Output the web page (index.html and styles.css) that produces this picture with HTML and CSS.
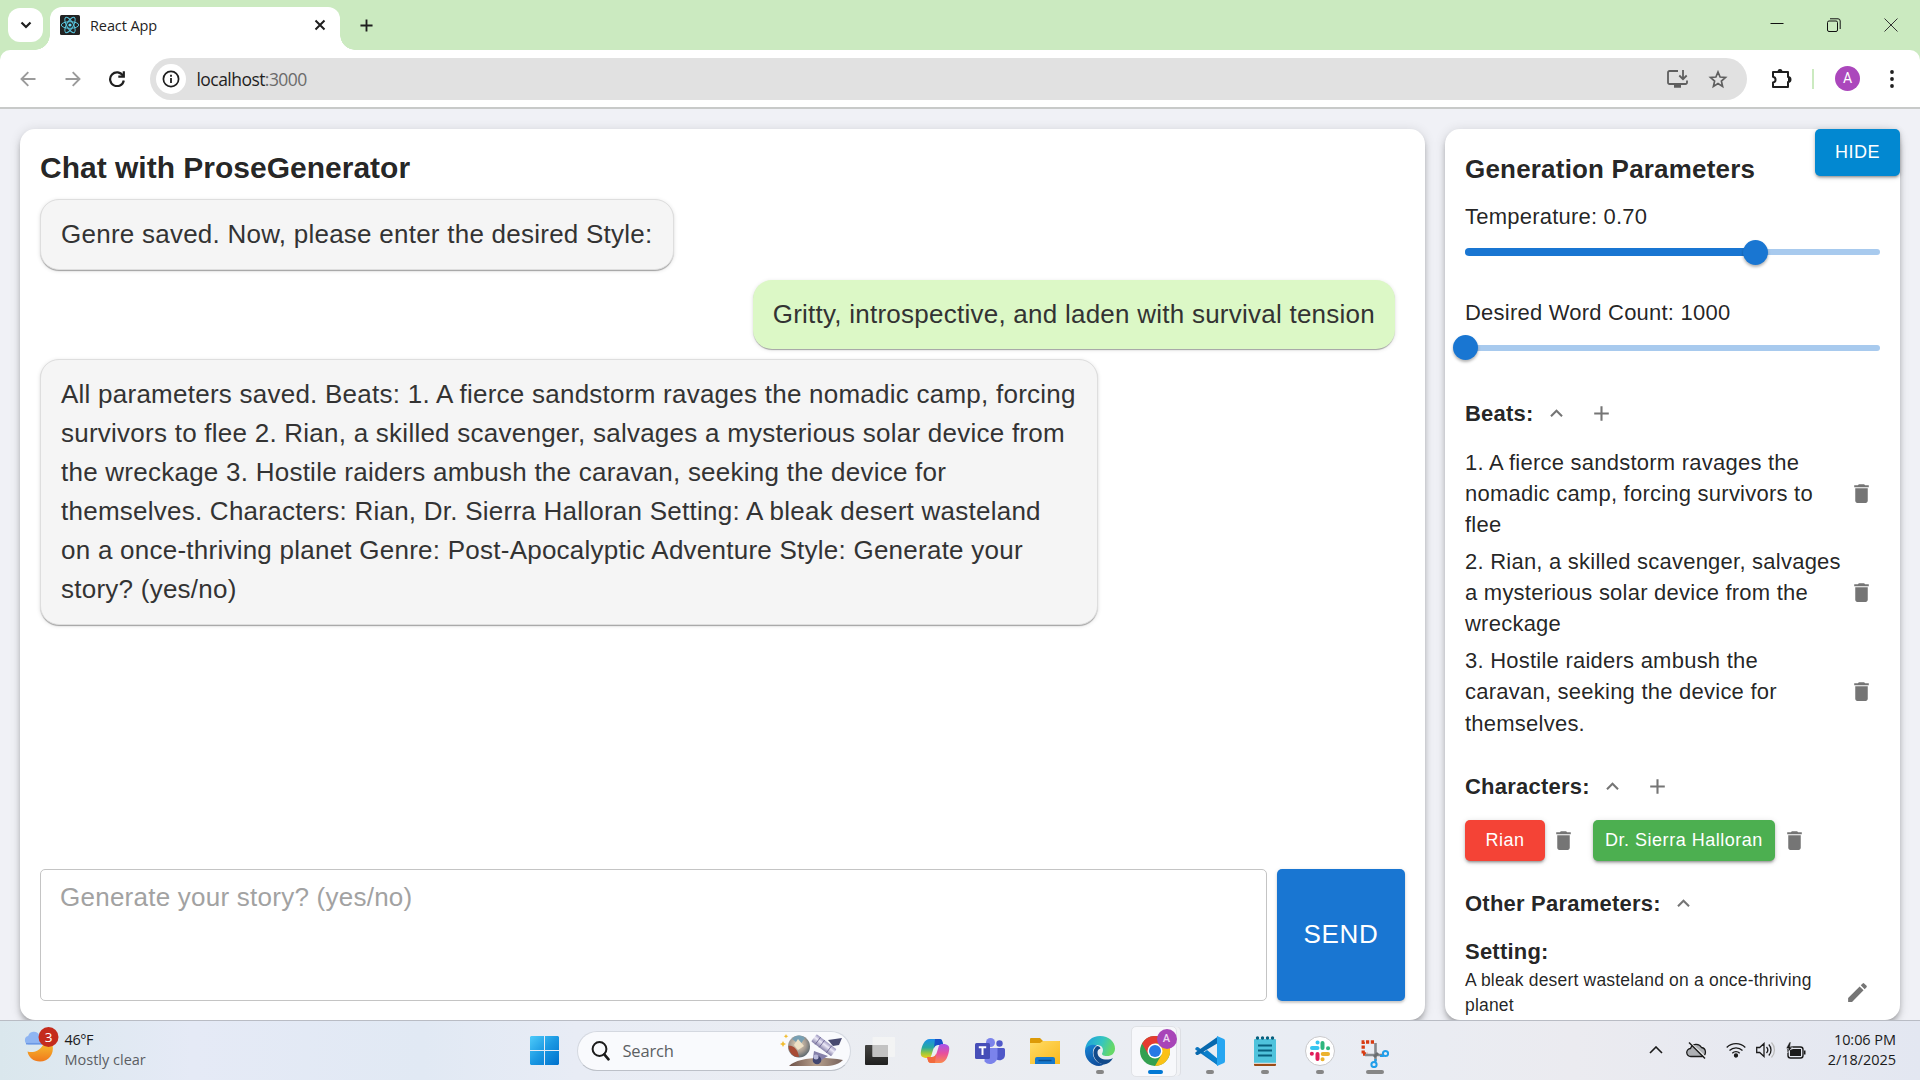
FILE: index.html
```html
<!DOCTYPE html>
<html lang="en">
<head>
<meta charset="utf-8">
<title>React App</title>
<link rel="stylesheet" href="styles.css">
</head>
<body>
<svg class="defs" aria-hidden="true">
  <symbol id="trash" viewBox="0 0 24 24"><path d="M6 19c0 1.100.9 2 2 2h8c1.100 0 2-.9 2-2V7H6v12zM19 4h-3.500l-1-1h-5l-1 1H5v2h14V4z"/></symbol>
  <symbol id="less" viewBox="0 0 24 24"><path d="m12 8-6 6 1.410 1.410L12 10.830l4.590 4.580L18 14z"/></symbol>
  <symbol id="plus" viewBox="0 0 24 24"><path d="M19 13h-6v6h-2v-6H5v-2h6V5h2v6h6v2z"/></symbol>
  <symbol id="pencil" viewBox="0 0 24 24"><path d="M3 17.250V21h3.750L17.810 9.940l-3.750-3.750L3 17.250zM20.710 7.040c.39-.39.39-1.020 0-1.410l-2.340-2.340a.9959.9959 0 0 0-1.410 0l-1.830 1.830 3.750 3.750 1.830-1.830z"/></symbol>
</svg>

<header class="browser">
  <div class="tabstrip">
    <div class="tab-search"><svg width="12" height="8" viewBox="0 0 12 8"><path d="M1.500 1.500 6 6l4.500-4.500" fill="none" stroke="#1f1f1f" stroke-width="2.200"/></svg></div>
    <div class="tab">
      <svg class="favicon" viewBox="0 0 20 20"><rect width="20" height="20" rx="1.500" fill="#222"/><g fill="none" stroke="#58c4dc" stroke-width="1"><ellipse cx="10" cy="10" rx="8.700" ry="3.300"/><ellipse cx="10" cy="10" rx="8.700" ry="3.300" transform="rotate(60 10 10)"/><ellipse cx="10" cy="10" rx="8.700" ry="3.300" transform="rotate(120 10 10)"/></g><circle cx="10" cy="10" r="1.600" fill="#61dafb"/></svg>
      <span class="tab-title">React App</span>
      <svg class="tab-close" viewBox="0 0 12 12"><path d="m1.500 1.500 9 9m0-9-9 9" stroke="#1f1f1f" stroke-width="2"/></svg>
    </div>
    <svg class="new-tab" viewBox="0 0 14 14"><path d="M7 .5v13M.5 7h13" stroke="#1f1f1f" stroke-width="2"/></svg>
    <div class="window-buttons">
      <svg width="14" height="14" viewBox="0 0 14 14"><path d="M.5 5.500h13" stroke="#111"/></svg>
      <svg width="14" height="14" viewBox="0 0 14 14" fill="none" stroke="#111"><rect x=".5" y="3" width="10" height="10.500" rx="1.500"/><path d="M3 .8h8a2.200 2.200 0 0 1 2.200 2.200v8"/></svg>
      <svg width="14" height="14" viewBox="0 0 14 14"><path d="m.5.5 13 13m0-13-13 13" stroke="#333"/></svg>
    </div>
  </div>
  <div class="toolbar">
    <svg class="nav" viewBox="0 0 16 16" fill="none" stroke="#9b9b9b" stroke-width="1.900"><path d="M15.500 8H2M8.300 1.200 1.500 8l6.800 6.800"/></svg>
    <svg class="nav" viewBox="0 0 16 16" fill="none" stroke="#9b9b9b" stroke-width="1.900"><path d="M.5 8H14M7.700 1.200 14.500 8l-6.800 6.800"/></svg>
    <svg class="nav" viewBox="0 0 16 16" fill="none" stroke="#1f1f1f" stroke-width="2.200"><path d="M14 4.800A6.900 6.900 0 1 0 14.800 9.500"/><path d="M9.300 5.600h5.500V.3"/></svg>
    <div class="omnibox">
      <span class="site-info"><svg width="18" height="18" viewBox="0 0 18 18"><circle cx="9" cy="9" r="7.600" fill="none" stroke="#1f1f1f" stroke-width="1.700"/><path d="M9 8v5M9 4.800v1.900" stroke="#1f1f1f" stroke-width="1.800"/></svg></span>
      <span class="url">localhost<span>:3000</span></span>
      <svg class="install" width="21" height="18" viewBox="0 0 21 18" fill="none" stroke="#5f5f5f" stroke-width="1.800"><path d="M11 1H2.500A1.500 1.500 0 0 0 1 2.500v10A1.500 1.500 0 0 0 2.500 14h16a1.500 1.500 0 0 0 1.500-1.500V10.500"/><path d="M16 0v9M12.300 5.500 16 9.200l3.700-3.700"/><path d="M7 16h7" stroke-width="3.500"/></svg>
      <svg class="star" width="20" height="19" viewBox="0 0 20 19"><path d="m10 2 2.100 5 5.400.5-4.100 3.600 1.200 5.300L10 13.600l-4.600 2.800 1.200-5.300-4.100-3.600 5.400-.5z" fill="none" stroke="#5f5f5f" stroke-width="1.700"/></svg>
    </div>
    <svg class="puzzle" viewBox="0 0 22 22"><path d="M3 4h15v5a2.500 2.500 0 0 1 0 5v5H3v-4.500c3.400-.6 3.400-5 0-5.700z" fill="none" stroke="#1f1f1f" stroke-width="2" stroke-linejoin="round"/><path d="M7.500 4a2.500 3 0 0 1 5 0zM18 9a3 2.500 0 0 1 0 5z" fill="#1f1f1f"/></svg>
    <i class="separator"></i>
    <span class="avatar">A</span>
    <svg class="more" viewBox="0 0 4 18"><circle cx="2" cy="2" r="1.900"/><circle cx="2" cy="9" r="1.900"/><circle cx="2" cy="16" r="1.900"/></svg>
  </div>
</header>

<main class="app">
  <section class="card chat">
    <h1>Chat with ProseGenerator</h1>
    <div class="messages">
      <p class="bubble">Genre saved. Now, please enter the desired Style:</p>
      <p class="bubble mine">Gritty, introspective, and laden with survival tension</p>
      <p class="bubble full">All parameters saved. Beats: 1. A fierce sandstorm ravages the nomadic camp, forcing<br>survivors to flee 2. Rian, a skilled scavenger, salvages a mysterious solar device from<br>the wreckage 3. Hostile raiders ambush the caravan, seeking the device for<br>themselves. Characters: Rian, Dr. Sierra Halloran Setting: A bleak desert wasteland<br>on a once-thriving planet Genre: Post-Apocalyptic Adventure Style: Generate your<br>story? (yes/no)</p>
    </div>
    <div class="composer">
      <div class="input">Generate your story? (yes/no)</div>
      <div class="send">SEND</div>
    </div>
  </section>

  <aside class="card params">
    <div class="hide">HIDE</div>
    <h2>Generation Parameters</h2>
    <div class="field">
      <div class="label">Temperature: 0.70</div>
      <div class="slider"><div class="track" style="width:70%"></div><div class="thumb" style="left:70%"></div></div>
    </div>
    <div class="field">
      <div class="label">Desired Word Count: 1000</div>
      <div class="slider"><div class="thumb" style="left:0"></div></div>
    </div>
    <div class="group beats-head"><h3>Beats:</h3><svg class="ic"><use href="#less"/></svg><svg class="ic add"><use href="#plus"/></svg></div>
    <ul class="beats">
      <li><span>1. A fierce sandstorm ravages the<br>nomadic camp, forcing survivors to<br>flee</span><svg class="ic"><use href="#trash"/></svg></li>
      <li><span>2. Rian, a skilled scavenger, salvages<br>a mysterious solar device from the<br>wreckage</span><svg class="ic"><use href="#trash"/></svg></li>
      <li><span>3. Hostile raiders ambush the<br>caravan, seeking the device for<br>themselves.</span><svg class="ic"><use href="#trash"/></svg></li>
    </ul>
    <div class="group char-head"><h3>Characters:</h3><svg class="ic"><use href="#less"/></svg><svg class="ic add"><use href="#plus"/></svg></div>
    <div class="chips">
      <span class="chip red">Rian</span><svg class="ic"><use href="#trash"/></svg>
      <span class="chip green">Dr. Sierra Halloran</span><svg class="ic"><use href="#trash"/></svg>
    </div>
    <div class="group other-head"><h3>Other Parameters:</h3><svg class="ic"><use href="#less"/></svg></div>
    <div class="setting">
      <div><h3>Setting:</h3><p>A bleak desert wasteland on a once-thriving<br>planet</p></div>
      <svg class="ic"><use href="#pencil"/></svg>
    </div>
  </aside>
</main>

<footer class="taskbar">
  <div class="weather">
    <svg width="36" height="38" viewBox="0 0 36 38">
      <defs><linearGradient id="moon" x1="0" y1="0" x2="0" y2="1"><stop offset="0" stop-color="#f5b52c"/><stop offset="1" stop-color="#f07a1c"/></linearGradient></defs>
      <path d="M3.500 25.500C8 27 15 26 19 19h9.500c2 9-4 16.500-12.500 16.500-6.500 0-11.500-4-12.500-10z" fill="url(#moon)"/>
      <path d="M4.500 18.500a4.300 4.300 0 0 1-.4-8.400 6 6 0 0 1 11-1.400L20 12v6.500z" fill="#8fb5f2"/><path d="M2 17.700h16" stroke="#6c98e4" stroke-width="1.500"/>
      <circle cx="24.500" cy="11" r="10" fill="#c42b1c"/><text x="24.500" y="16" text-anchor="middle" class="badge-text">3</text>
    </svg>
    <div class="weather-text"><b>46°F</b><span>Mostly clear</span></div>
  </div>

  <div class="dock">
    <div class="cell"><svg width="29" height="29" viewBox="0 0 29 29"><defs><linearGradient id="win" x1="0" y1="0" x2="1" y2="1"><stop offset="0" stop-color="#4ecbfa"/><stop offset=".5" stop-color="#1a98e2"/><stop offset="1" stop-color="#0070cc"/></linearGradient></defs><path fill="url(#win)" d="M1 0h13v14H0V1zM15 0h13l1 1v13H15zM0 15h14v14H1l-1-1zM15 15h14v13l-1 1H15z"/></svg></div>
    <div class="search">
      <svg width="19" height="20" viewBox="0 0 19 20" fill="none" stroke="#1b1b1b"><circle cx="8.500" cy="8" r="6.900" stroke-width="2"/><path d="m13.300 13.300 4.200 5" stroke-width="2.600" stroke-linecap="round"/></svg>
      <span>Search</span>
      <svg class="search-art" width="64" height="34" viewBox="0 0 64 34">
        <defs><radialGradient id="orb" cx=".45" cy=".4" r=".6"><stop offset="0" stop-color="#e9d9bc"/><stop offset=".6" stop-color="#a79d93"/><stop offset="1" stop-color="#5e6a70"/></radialGradient><linearGradient id="tube" x1="0" y1="0" x2="0" y2="1"><stop offset="0" stop-color="#9a95bd"/><stop offset=".4" stop-color="#edeaf8"/><stop offset="1" stop-color="#8580a8"/></linearGradient><linearGradient id="ground" x1="0" x2="1"><stop offset="0" stop-color="#6d5148"/><stop offset=".5" stop-color="#b7a08d"/><stop offset="1" stop-color="#75605a"/></linearGradient></defs>
        <path d="M9 32c8-8 31-10 54-6-6 6-14 6-20 6z" fill="url(#ground)"/>
        <circle cx="19" cy="12.500" r="11" fill="url(#orb)"/><path d="M8.500 12c4-1 9 2 10.500 11-7 0-10-5-10.500-11z" fill="#a84b35"/><path d="M12 5c4-5 10-4 13-1l-5 7z" fill="#78a0b4"/><path d="m18 5 6 7-6 4-4-5z" fill="#eee1c6"/>
        <g transform="rotate(37 44 12)"><rect x="31" y="7" width="25" height="9" rx="1" fill="url(#tube)"/><path d="M36 7v9m5-9v9m9-9v9" stroke="#68628f" stroke-width=".8"/></g>
        <path d="m48 6 14-2-3 7-6 1z" fill="#484a70"/><path d="m34 17 14 5-5 3-5 4-5-5z" fill="#8580a9"/><circle cx="37" cy="26" r="4.300" fill="#41456f"/><circle cx="36" cy="23" r="2.500" fill="#b8b8d8"/>
        <path d="m3 7 1 2 2 1-2 1-1 2-1-2-2-1 2-1zM6 0l.7 1.600 1.600.7-1.600.7L6 4.600 5.300 3l-1.600-.7 1.600-.7z" fill="#f1bd30"/>
      </svg>
    </div>
    <div class="cell"><svg width="30" height="30" viewBox="0 0 30 30"><defs><linearGradient id="tv" x1="0" y1="0" x2="0" y2="1"><stop offset="0" stop-color="#444442"/><stop offset="1" stop-color="#20201f"/></linearGradient></defs><rect y="9" width="23" height="20" rx="1" fill="url(#tv)"/><rect x="7.500" y="1" width="22.500" height="20" rx="1" fill="#f4f4f4" fill-opacity=".85"/><path d="M7.500 9H23v12H7.500z" fill="#bdbdbd" fill-opacity=".8"/></svg></div>
    <div class="cell"><svg width="30" height="28" viewBox="0 0 30 28">
      <defs><linearGradient id="cpa" x1="0" y1="0" x2="0" y2="1"><stop offset="0" stop-color="#1a8eea"/><stop offset=".45" stop-color="#27a9a0"/><stop offset=".75" stop-color="#9cc93b"/><stop offset="1" stop-color="#f4ca1c"/></linearGradient><linearGradient id="cpb" x1="0" y1="0" x2="0" y2="1"><stop offset="0" stop-color="#a555ed"/><stop offset=".5" stop-color="#e8509c"/><stop offset="1" stop-color="#fb8a4b"/></linearGradient></defs>
      <path d="M10 2h9c3 0 3 3 4 6h-5c-3 0-4 2-5 5l-1.500 5c-1 3-2 3-4.500 3-5 0-7-2-6-7C2 9 4 2 10 2z" fill="url(#cpa)"/><path d="M15 2h5c2.500 0 2.500 3 3.500 6H18c-2 0-3 1-4 3z" fill="#1551c9"/>
      <path d="M20 26h-9c-3 0-3-3-4-6h5c3 0 4-2 5-5l1.500-5c1-3 2-3 4.500-3 5 0 7 2 6 7-1 5-3 12-9 12z" fill="url(#cpb)"/><path d="M15 26h-4c-3 0-3-3-4-6h5c2 0 3-1 4-3z" fill="#f26a3d"/>
    </svg></div>
    <div class="cell"><svg width="30" height="28" viewBox="0 0 30 28"><circle cx="24.500" cy="6.500" r="3.200" fill="#5059c9"/><path d="M21 11h7.500q1.500 0 1.500 1.500V18a5.500 5.500 0 0 1-9 4z" fill="#4f58c8"/><circle cx="15.500" cy="5.500" r="4.500" fill="#7b83eb"/><path d="M10 11h12.500v8.500a7.500 7.500 0 0 1-13 5z" fill="#7b83eb"/><rect y="6" width="15" height="16" rx="1.500" fill="#464eb8"/><path d="M3.800 10.200h7.400M7.500 10v8" stroke="#fff" stroke-width="2"/></svg></div>
    <div class="cell"><svg width="30" height="28" viewBox="0 0 30 28"><defs><linearGradient id="fold" x1="0" y1="0" x2="1" y2="1"><stop offset="0" stop-color="#ffdc66"/><stop offset="1" stop-color="#fbb91c"/></linearGradient></defs><path d="M0 2q0-1 1-1h9l3 3h16q1 0 1 1v5H0z" fill="#dc9a07"/><path d="M0 6h10l3-2h16q1 0 1 1v22H0z" fill="url(#fold)"/><path d="M5 27v-5q0-2 2-2h16q2 0 2 2v5z" fill="#1679cd"/><path d="M8.500 23.500h13" stroke="#0a4f91" stroke-width="1.500"/></svg></div>
    <div class="cell open"><svg width="30" height="30" viewBox="0 0 30 30">
      <defs><linearGradient id="e1" x1="0" y1="0" x2="1" y2=".3"><stop offset="0" stop-color="#1b9be0"/><stop offset=".6" stop-color="#35c5c0"/><stop offset="1" stop-color="#65d868"/></linearGradient><linearGradient id="e2" x1="0" y1="0" x2=".4" y2="1"><stop offset="0" stop-color="#1787d8"/><stop offset="1" stop-color="#0f4f9e"/></linearGradient></defs>
      <path d="M0 14C1 5 7 0 15 0c9 0 15 6 15 12.500 0 5-3.500 7.500-8 7.500-4 0-6-1.500-4.500-3.500 1-2 1-7-5-7.500C7 8.700 2 11 0 14z" fill="url(#e1)"/>
      <path d="M0 14c2-5 8-6 12-4.500-4 2-5 6-3.500 11C10 25 14 28 19 28q-2 2-5 2C6 29.500-.5 23 0 14z" fill="url(#e2)"/><path d="M12 10c-7 5-3 17 7 18.500 4-.5 7-3 9-6.500-5 3-15 2-15.500-5-.2-3 1.500-4 3-4.500Q15 10 12 10z" fill="#114a8b"/></svg></div>
    <div class="cell open active"><svg class="chrome" width="30" height="30" viewBox="0 0 30 30"><circle cx="15" cy="15" r="15" fill="#34a050"/><path d="M2 7.500A15 15 0 0 1 28 7.500H15L8.500 18.700z" fill="#e53b30"/><path d="M28 7.500A15 15 0 0 1 15 30l6.500-11.300L15 7.500z" fill="#fbc116"/><circle cx="15" cy="15" r="7.500" fill="#fff"/><circle cx="15" cy="15" r="6" fill="#2879e6"/></svg><span class="profile">A</span></div>
    <div class="cell open"><svg width="30" height="30" viewBox="0 0 30 30"><path d="M1 11.500q1-1 2.300-.2L23 26.500v3L.6 13.800q-.8-1 .4-2.300z" fill="#0b75bf"/><path d="M1 18.500q1 1 2.300.2L23 7V.5L.6 16.200q-.8 1 .4 2.300z" fill="#0868ad"/><path d="M8 17 23 29.500V23L12 14z" fill="#0b80cc"/><path d="m22 0 7 3q1 .5 1 2v20q0 1.500-1 2l-7 3z" fill="#27a6f1"/></svg></div>
    <div class="cell open"><svg width="22" height="30" viewBox="0 0 22 30"><path d="M0 26h22v3q0 1-1 1H1q-1 0-1-1z" fill="#9b4b16"/><path d="M0 4q0-1 1-1h20q1 0 1 1v23H0z" fill="#4fc3dc"/><path d="M0 27.300h22" stroke="#f5f5f5"/><g fill="#075f7d"><circle cx="3.500" cy="2" r="1.700"/><circle cx="8.500" cy="2" r="1.700"/><circle cx="13.500" cy="2" r="1.700"/><circle cx="18.500" cy="2" r="1.700"/></g><path d="M4 9.500h14M4 14.500h14M4 19.500h14" stroke="#08607f" stroke-width="2"/></svg></div>
    <div class="cell open"><svg width="30" height="30" viewBox="0 0 30 30"><circle cx="15" cy="15" r="14.500" fill="#fff" stroke="#c9c9cc"/><g stroke-width="4" stroke-linecap="round"><path d="M12.500 6.500h.1M7 12h5.500" stroke="#36c5f0"/><path d="M17.500 7v5M23 12.300h.1" stroke="#2eb67d"/><path d="M17.700 18H23M17.500 23.200h.1" stroke="#ecb22e"/><path d="M12.500 18v5M6.800 17.800h.1" stroke="#e01e5a"/></g></svg></div>
    <div class="cell open wide"><svg width="28" height="28" viewBox="0 0 28 28" class="snip"><path d="M13 2H2.200v12M2 14h5" fill="none" stroke="#d83b12" stroke-width="3.300" stroke-dasharray="3.200 1.600"/><path d="M14.500 3v18M4 15h17" stroke="#85898d" stroke-width="2.600"/><path d="m13 17 4-4" stroke="#696d70" stroke-width="3"/><g fill="none" stroke="#209eea" stroke-width="2"><circle cx="24.500" cy="13.500" r="2.600"/><circle cx="13" cy="24.500" r="2.600"/><path d="M19 16h3l1-1M14.500 19v3"/></g></svg></div>
  </div>

  <div class="tray">
    <svg class="t-up" width="14" height="8" viewBox="0 0 14 8"><path d="m1 7 6-6 6 6" fill="none" stroke="#1b1b1b" stroke-width="1.600"/></svg>
    <svg class="t-cloud" width="21" height="17" viewBox="0 0 21 17"><path d="M5 14.500a4 4 0 0 1-.5-8 6 6 0 0 1 11-1 4.600 4.600 0 0 1 .5 9z" fill="#aeb0b4" stroke="#1b1b1b" stroke-width="1.300"/><path d="m4.500 1 15 14" stroke="#eee" stroke-width="1.500"/><path d="m3 .5 16 16" stroke="#1b1b1b" stroke-width="1.400"/></svg>
    <svg class="t-wifi" width="20" height="16" viewBox="0 0 20 16" fill="none" stroke="#1b1b1b" stroke-width="1.300"><path d="M.7 5.500a13 13 0 0 1 18.600 0M3.500 8.500a9.200 9.200 0 0 1 13 0M6.300 11.200a5.200 5.200 0 0 1 7.400 0"/><circle cx="10" cy="13.500" r="1.500" fill="#1b1b1b"/></svg>
    <svg class="t-vol" width="20" height="16" viewBox="0 0 20 16" fill="none" stroke="#1b1b1b" stroke-width="1.300"><path d="M.7 5.500h3L8 1.500v13l-4.300-4h-3zM10.500 5a4.500 4.500 0 0 1 0 6M12.800 2.500a8 8 0 0 1 0 11"/><path d="M15.500.5a11 11 0 0 1 0 15" stroke="#bbb"/></svg>
    <svg class="t-bat" width="20" height="17" viewBox="0 0 20 17"><rect x="2" y="5" width="15" height="11" rx="2.500" fill="none" stroke="#1b1b1b" stroke-width="1.400"/><path d="M4 14V8l3-1h8v7zM18 8.500h1.500v4H18z" fill="#1b1b1b"/><path d="M3.500 0 0 6.500h2.500L1.500 11l5-6H4L5 0z" fill="#1b1b1b" stroke="#e9eaf2" stroke-width=".5"/></svg>
    <div class="clock"><span>10:06 PM</span><span>2/18/2025</span></div>
  </div>
</footer>
</body>
</html>
```
FILE: styles.css
```css
* { box-sizing: border-box; }
body {
  margin: 0;
  width: 1920px;
  height: 1080px;
  overflow: hidden;
  display: flex;
  flex-direction: column;
  font-family: "Liberation Sans", Arial, sans-serif;
  color: rgba(0, 0, 0, .87);
}
h1, h2, h3, p, ul { margin: 0; padding: 0; }
svg { display: block; flex: none; }
.defs { position: absolute; width: 0; height: 0; }

/* Browser chrome */
.browser {
  flex: none;
  height: 109px;
  background: #cbeac0;
  border-bottom: 2px solid #c8cac9;
  font-family: "Open Sans", "Noto Sans", sans-serif;
}
.tabstrip { height: 50px; display: flex; align-items: flex-start; padding-left: 8px; }
.tab-search {
  width: 35px; height: 34px; margin-top: 8px;
  display: flex; align-items: center; justify-content: center;
  background: #fff; border-radius: 12px;
}
.tab {
  position: relative;
  width: 290px; height: 43px; margin: 7px 0 0 7px; padding: 0 14px 7px 10px;
  display: flex; align-items: center;
  background: #fff; border-radius: 12px 12px 0 0;
}
.tab::before, .tab::after {
  content: ""; position: absolute; bottom: 0; width: 15px; height: 15px;
}
.tab::before { left: -15px; background: radial-gradient(circle at 0 0, transparent 14.500px, #fff 15px); }
.tab::after { right: -15px; background: radial-gradient(circle at 100% 0, transparent 14.500px, #fff 15px); }
.favicon { width: 20px; height: 20px; }
.tab-title { margin-left: 10px; font-size: 14.500px; letter-spacing: -.1px; color: #1f1f1f; }
.tab-close { width: 12px; height: 12px; margin-left: auto; }
.new-tab { width: 13px; height: 13px; margin: 18.500px 0 0 19.500px; }
.window-buttons { margin: 18px 22px 0 auto; display: flex; gap: 43px; }
.toolbar {
  height: 57px; display: flex; align-items: center;
  background: #fff; border-radius: 10px 10px 0 0; padding: 0 26px 0 20px;
}
.nav { width: 16px; height: 16px; margin-right: 28.500px; }
.nav + .nav + .nav { margin-right: 25px; }
.omnibox {
  width: 1597px; height: 42px; border-radius: 21px; background: #e1e1e1;
  display: flex; align-items: center; padding: 0 19px 0 6px; margin-top: 1px;
}
.site-info {
  width: 30px; height: 30px; border-radius: 50%; background: #fff;
  display: flex; align-items: center; justify-content: center;
}
.url { margin-left: 10.500px; font-size: 17.500px; letter-spacing: -.55px; color: #1f1f1f; }
.url span { color: #6b6b6b; }
.install { margin-left: auto; }
.star { margin-left: 20px; }
.puzzle { width: 22px; height: 22px; margin-left: 23px; }
.separator { width: 2px; height: 20px; margin-left: 20px; background: #cbeac0; }
.avatar {
  width: 25px; height: 25px; margin-left: 21px; border-radius: 50%;
  background: #ab47bc; color: #fff; font: 14px/25px Roboto, sans-serif; text-align: center;
}
.more { width: 4px; height: 18px; margin-left: auto; fill: #1f1f1f; }

/* Application */
.app {
  flex: 1; min-height: 0; display: flex; gap: 20px; padding: 20px 20px 0;
  background: #f0f1f6; overflow: hidden;
}
.card {
  position: relative; background: #fff; border-radius: 15px; padding: 20px;
  box-shadow: 0 4px 5px -2px rgba(0, 0, 0, .2), 0 5px 6px rgba(0, 0, 0, .14), 0 1px 12px rgba(0, 0, 0, .12);
}
.chat { width: 1405px; display: flex; flex-direction: column; }
h1 { font-size: 30px; line-height: 38px; margin-bottom: 12px; }
.messages { flex: 1; display: flex; flex-direction: column; gap: 10px; padding-right: 10px; align-items: flex-start; }
.bubble {
  padding: 15px 20px; border: 1px solid #dedede; border-radius: 19px;
  background: #f5f5f5; color: #333; font-size: 26px; line-height: 39px; letter-spacing: .00938em;
  white-space: nowrap;
  box-shadow: 0 2px 1px -1px rgba(0, 0, 0, .2), 0 1px 1px rgba(0, 0, 0, .14), 0 1px 4px rgba(0, 0, 0, .12);
}
.bubble.full { width: 1058px; }
.bubble.mine { align-self: flex-end; border: 0; background: #dcf8c6; }
.composer { display: flex; gap: 10px; height: 132px; margin-bottom: -1px; }
.input {
  width: 1227px; border: 1px solid #c4c4c4; border-radius: 5px; padding: 11px 19px;
  font-size: 26px; line-height: 32px; letter-spacing: .00938em; color: #a2a2a2;
}
.send {
  width: 128px; border-radius: 5px; background: #1976d2; color: #fff; padding-bottom: 2px;
  display: flex; align-items: center; justify-content: center;
  font-size: 26px; letter-spacing: .02857em;
  box-shadow: 0 2px 2px rgba(0, 0, 0, .14), 0 1px 4px rgba(0, 0, 0, .12);
}
.params { width: 455px; }
.hide {
  position: absolute; top: 0; right: 0; width: 85px; height: 47px; border-radius: 5px;
  background: #0288d1; color: #fff; font-size: 18px; line-height: 46px; letter-spacing: .02857em; text-align: center;
  box-shadow: 0 3px 2px -2px rgba(0, 0, 0, .2), 0 2px 3px rgba(0, 0, 0, .2), 0 1px 6px rgba(0, 0, 0, .12);
}
h2 { font-size: 26px; line-height: 40px; letter-spacing: .0075em; margin-bottom: 13px; }
.field { height: 95.500px; font-size: 22px; letter-spacing: .01em; }
.label { line-height: 30px; }
.slider { position: relative; height: 6px; margin-top: 17px; border-radius: 3px; background: #a8caee; }
.track { height: 8px; position: relative; top: -1px; border-radius: 4px; background: #1976d2; }
.thumb {
  position: absolute; top: -9.500px; width: 25px; height: 25px; margin-left: -12.500px; border-radius: 50%;
  background: #1976d2; box-shadow: 0 2px 3px rgba(0, 0, 0, .3);
}
.ic { width: 25px; height: 25px; margin: 0 6px; fill: #757575; }
.group { display: flex; align-items: center; height: 38px; gap: 4.500px; }
.group .add { margin-left: 9.500px; }
h3 { font-size: 22px; line-height: 31px; letter-spacing: .01em; }
.beats-head { margin-top: 1px; }
.beats { list-style: none; margin-top: 14.500px; display: flex; flex-direction: column; gap: 4.700px; }
.beats li {
  display: flex; align-items: center; justify-content: space-between; padding-right: 0;
  font-size: 22px; line-height: 31.460px; letter-spacing: .01071em; white-space: nowrap;
}
.char-head { margin-top: 28.500px; }
.chips { display: flex; align-items: center; margin-top: 15px; }
.chip {
  min-width: 80px; height: 41px; padding: 0 12px; border-radius: 5px; color: #fff;
  font-size: 18px; line-height: 40px; letter-spacing: .02857em; text-align: center;
  box-shadow: 0 3px 2px -2px rgba(0, 0, 0, .2), 0 2px 3px rgba(0, 0, 0, .2), 0 1px 6px rgba(0, 0, 0, .12);
}
.chip + .ic + .chip { margin-left: 11px; }
.green + .ic { margin-left: 7px; }
.red { background: #f44336; }
.green { background: #4caf50; }
.other-head { margin-top: 23px; }
.setting { display: flex; align-items: center; justify-content: space-between; margin-top: 14px; }
.setting p { margin-top: 1px; font-size: 17.500px; line-height: 25px; letter-spacing: .01071em; }
.setting .ic { margin: 31px 10px 0 0; }

/* Taskbar */
.taskbar {
  position: relative; flex: none; height: 60px; display: flex; align-items: center;
  border-top: 1px solid #b9bcc4;
  background: linear-gradient(90deg, #dae7ed, #e5eaf6 10%, #e1e9f4 22%, #e8ecf5 30%, #ebedf1 48%, #e9edf4 68%, #ebebf0 82%, #e3e7f1);
  font-family: "Open Sans", "Noto Sans", sans-serif;
}
.weather { width: 517px; display: flex; align-items: flex-start; padding-left: 24px; height: 60px; }
.weather > svg { margin-top: 5.500px; }
.badge-text { font-size: 13.500px; fill: #fff; }
.weather-text { display: flex; flex-direction: column; margin: 9px 0 0 4.500px; font-size: 14.500px; line-height: 20px; letter-spacing: 0; color: #5b5e63; }
.weather-text b { font-weight: 400; color: #1b1b1b; letter-spacing: -.4px; }
.dock { display: flex; align-items: center; height: 60px; }
.cell { position: relative; width: 55px; height: 58px; display: flex; align-items: center; justify-content: center; }
.search {
  width: 274px; height: 40px; margin: 0 2px 0 4.500px; padding: 0 6px 0 13px; border-radius: 20px;
  display: flex; align-items: center; background: #f9fafd; border: 1px solid #d4d8e0; border-bottom-color: #bcc0c8;
}
.search span { margin-left: 13px; font-size: 16.500px; letter-spacing: -.2px; color: #5c5f63; }
.search-art { margin-left: auto; }
.open::after {
  content: ""; position: absolute; left: 23.500px; bottom: 6px; width: 8px; height: 4px; border-radius: 2px; background: #868686;
}
.wide::after { left: 18px; width: 18px; }
.snip { margin-top: 6px; }
.active::before {
  content: ""; position: absolute; left: 3px; top: 4px; width: 44px; height: 49px; border-radius: 5px;
  background: #f7f8fb; border: 1px solid #e0e2e6; box-shadow: 4px 0 0 -1px #f1f2f5, 5px 0 0 -1px #dddfe4;
}
.active::after { left: 20px; width: 15px; background: #0078d4; }
.chrome { position: relative; }
.profile {
  position: absolute; left: 29px; top: 7.500px; width: 20px; height: 20px; border-radius: 50%;
  background: #a845b8; color: #eed9f2; font: 500 11px/20px Roboto, sans-serif; text-align: center;
}
.tray { margin-left: auto; display: flex; align-items: center; height: 60px; padding-right: 24px; }
.t-up, .t-cloud, .t-wifi, .t-vol, .t-bat { margin-top: -1px; }
.t-cloud { margin-left: 23px; }
.t-wifi { margin-left: 19px; }
.t-vol { margin-left: 10px; }
.t-bat { margin-left: 10px; }
.clock {
  width: 90px; margin-top: -2px; display: flex; flex-direction: column; text-align: right; white-space: nowrap;
  font-size: 14.500px; line-height: 20px; letter-spacing: -.05px; color: #1b1b1b;
}
```
